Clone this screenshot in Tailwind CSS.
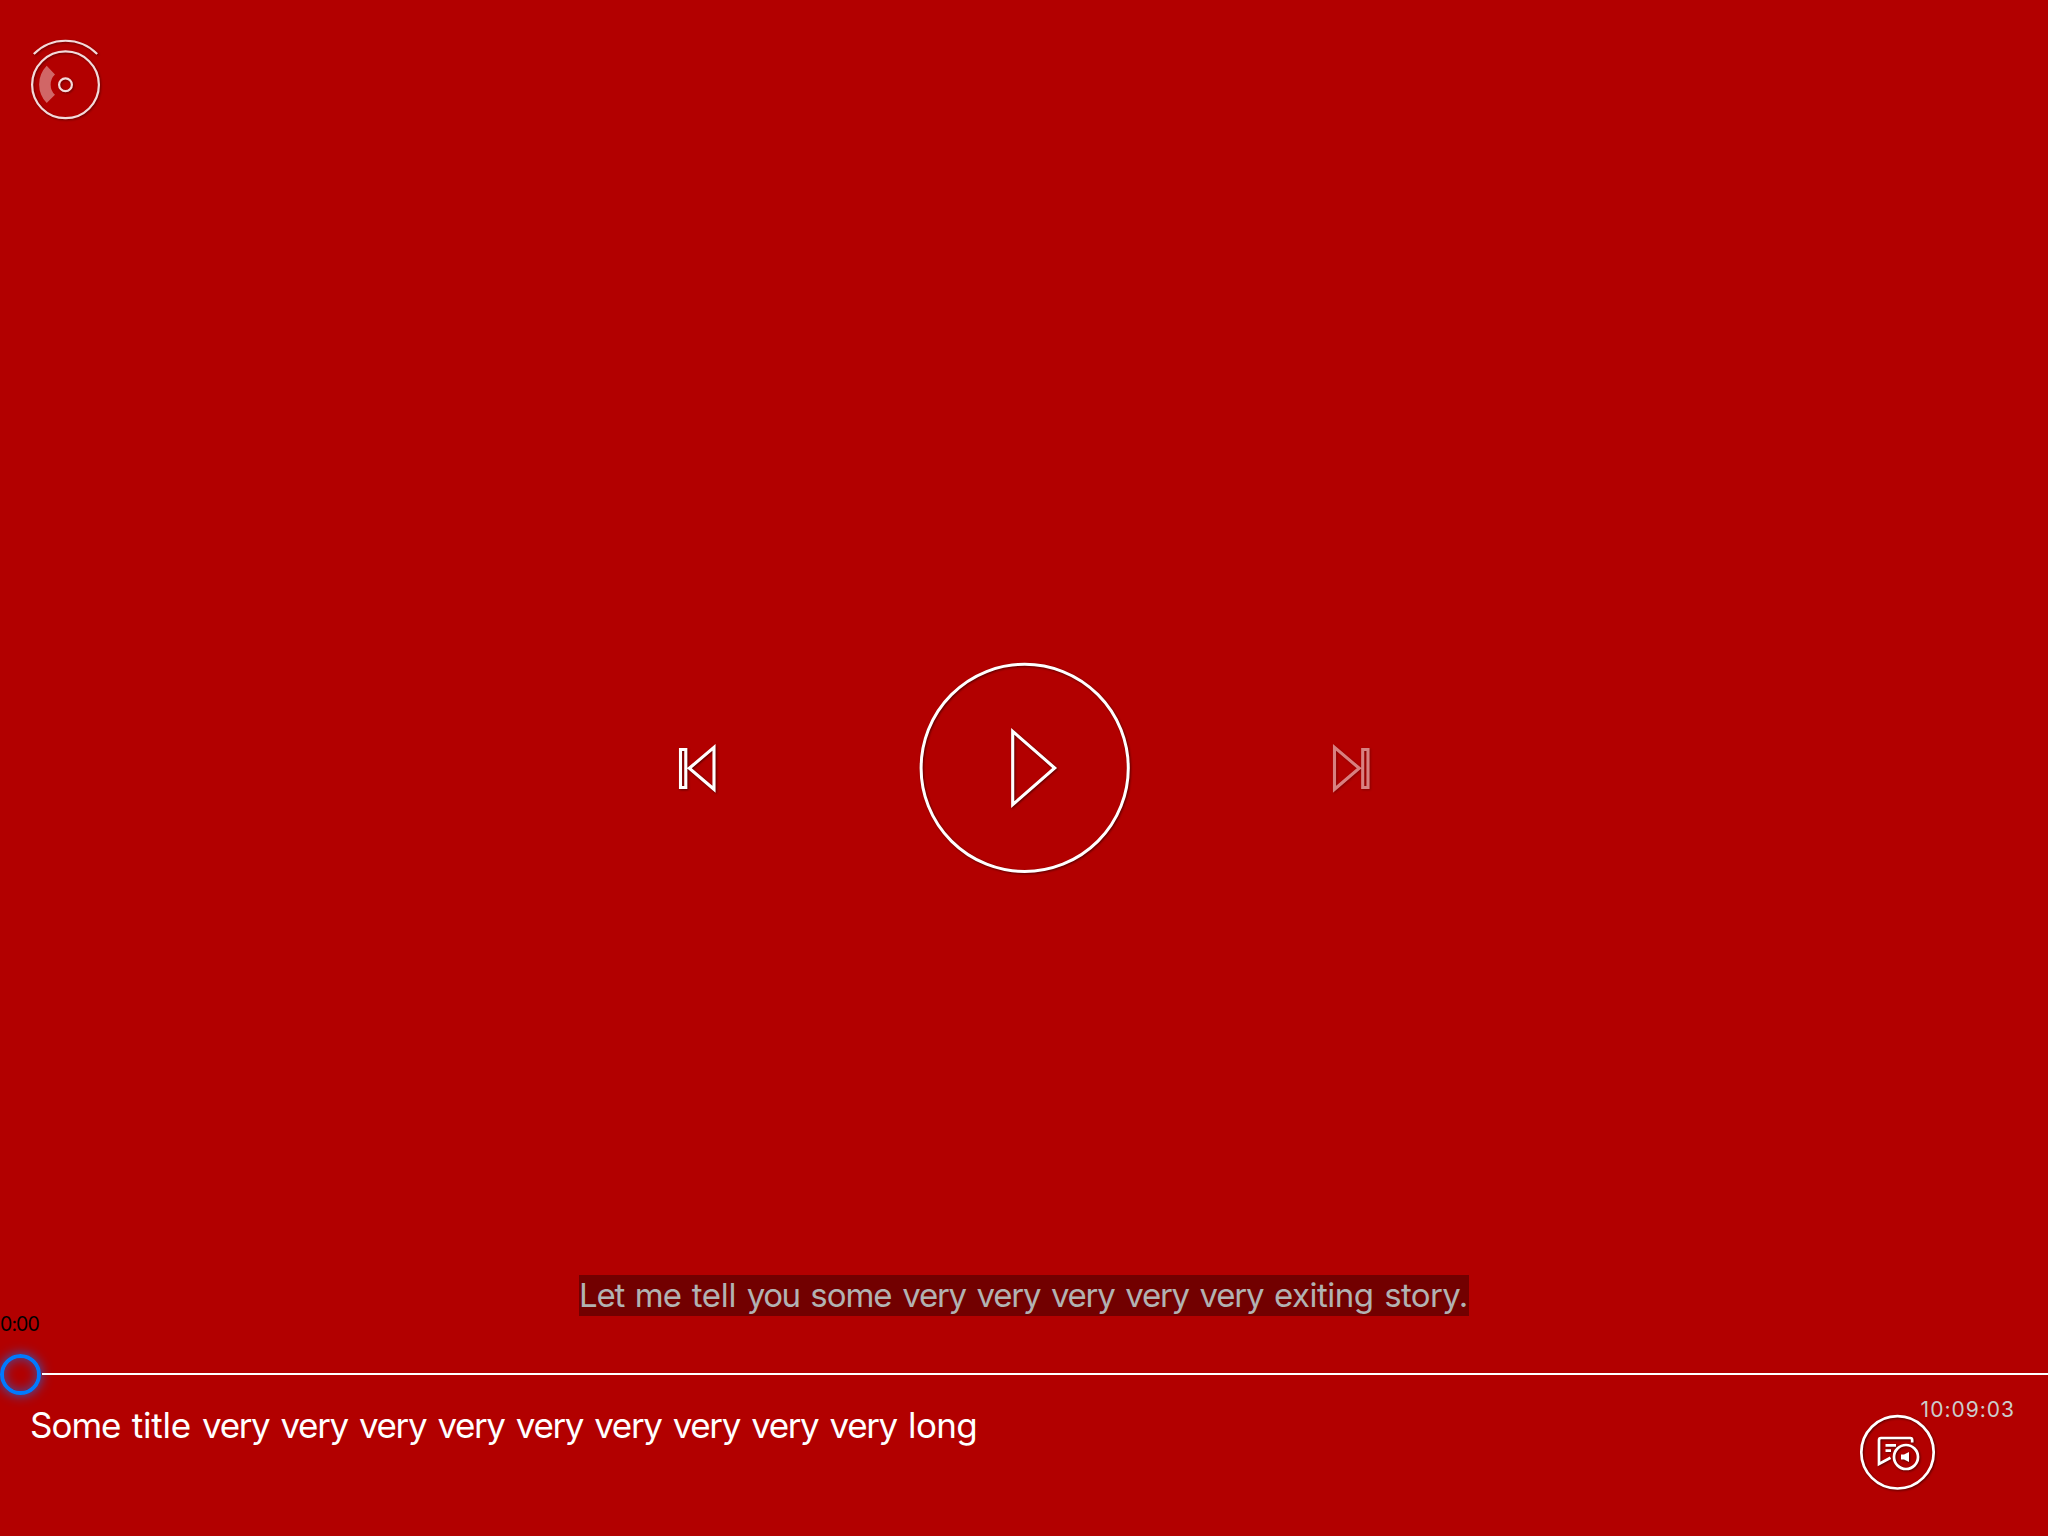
<!DOCTYPE html>
<html lang="en"><head><meta charset="utf-8"><title>Player</title>
<script src="https://cdn.jsdelivr.net/npm/@tailwindcss/browser@4"></script></head>
<body class="w-[2048px] h-[1536px] overflow-hidden bg-[#b20000] font-['Inter',sans-serif] text-white">
<div class="flex h-[1536px] flex-col">
<header class="h-[652px] pl-6 pt-6">
<svg class="block" width="100" height="110" viewBox="24 24 100 110" fill="none"><g class="drop-shadow-[1px_1px_1px_rgba(0,0,0,0.4)]" stroke="#f3dada" stroke-width="2.2"><path d="M33.8 54A44.5 44.5 0 0 1 97.2 54"/><circle cx="65.5" cy="84.8" r="33.4"/><circle cx="65.5" cy="84.8" r="6.4"/></g><path d="M46.7 65.8A26.6 26.6 0 0 0 46.7 103L55 94.8A14 14 0 0 1 55 74.5Z" fill="#d16666"/></svg>
</header>
<main class="flex h-[232px] items-center justify-between px-[672px]">
<svg class="drop-shadow-[1px_1px_1px_rgba(0,0,0,0.5)]" width="52" height="60" viewBox="672 738 52 60" fill="none" stroke="#fff" stroke-width="3.1"><path d="M680.5 749.5h5.3v38h-5.3zM689.3 768.3L714 747.3v42z"/></svg>
<svg class="drop-shadow-[1px_1px_1px_rgba(0,0,0,0.5)]" width="232" height="232" viewBox="908 652 232 232" fill="none" stroke="#fff" stroke-width="3"><circle cx="1024.7" cy="767.9" r="103.6"/><path d="M1012.7 731.3V804.7L1054.7 768z" stroke-width="3.1"/></svg>
<svg class="opacity-50 drop-shadow-[1px_1px_1px_rgba(0,0,0,0.5)]" width="52" height="60" viewBox="1324 738 52 60" fill="none" stroke="#fff" stroke-width="3.1"><path d="M1362.7 749.5h5.3v38h-5.3zM1359.2 768.3L1334.5 747.3v42z"/></svg>
</main>
<div class="flex h-[432px] items-end justify-center">
<p class="h-[41px] w-[890px] whitespace-nowrap bg-[#720000] text-[33px] leading-[41px] [word-spacing:1.4px] text-[#b2b2b2]"><span class="tracking-[-1.2px]">Let</span> <span class="tracking-[-1px]">me</span> <span class="tracking-[-0.3px]">tell</span> <span class="tracking-[-1.5px]">you</span> <span class="tracking-[-1px]">some</span> <span class="tracking-[-1.25px]">very</span> <span class="tracking-[-1.25px]">very</span> <span class="tracking-[-1.25px]">very</span> <span class="tracking-[-1.25px]">very</span> <span class="tracking-[-1.25px]">very</span> <span class="tracking-[-0.5px]">exiting</span> <span class="tracking-[-0.6px]">story.</span></p>
</div>
<div class="h-[37px] text-[19.5px] leading-[16px] tracking-[-0.9px] text-black">0:00</div>
<div class="flex h-[42px] items-center"><span class="size-[41px] shrink-0 rounded-full border-4 border-[#007aff] shadow-[0_0_12px_rgba(0,122,255,0.8),inset_0_0_12px_rgba(0,122,255,0.6)]"></span><span class="ml-px h-0.5 grow bg-white"></span></div>
<footer class="flex grow justify-between pl-[30px] pr-[34px]">
<h1 class="pt-2 text-[35px] leading-[44px] tracking-[-0.2px] [word-spacing:1.5px] whitespace-nowrap"><span class="tracking-[-1px]">Some</span> title <span class="tracking-[-1.38px]">very</span> <span class="tracking-[-1.38px]">very</span> <span class="tracking-[-1.38px]">very</span> <span class="tracking-[-1.38px]">very</span> <span class="tracking-[-1.38px]">very</span> <span class="tracking-[-1.38px]">very</span> <span class="tracking-[-1.38px]">very</span> <span class="tracking-[-1.38px]">very</span> <span class="tracking-[-1.38px]">very</span> <span class="tracking-[-0.6px]">long</span></h1>
<div class="flex w-[154px] flex-col">
<time class="-mr-px h-[17px] self-end pt-2 text-[21px] leading-[14px] tracking-[1px] whitespace-nowrap text-[#cccccc]">10:09:03</time>
<svg class="block shrink-0 overflow-visible drop-shadow-[1px_1px_1px_rgba(0,0,0,0.5)]" width="76" height="76" viewBox="1860 1412 76 76" fill="none" stroke="#fff" stroke-width="2.7"><circle cx="1897.5" cy="1452.3" r="36.2"/><path d="M1912.2 1442.5V1440Q1912.2 1438 1910.2 1438H1881Q1879 1438 1879 1440V1464L1890.5 1457.8M1885.5 1445.3H1896M1885.5 1450.7H1891"/><circle cx="1906" cy="1457" r="12"/><path d="M1901 1454.5H1904L1909 1452V1462L1904 1459.5H1901Z" fill="#fff" stroke="none"/></svg>
</div>
</footer>
</div>
</body></html>
